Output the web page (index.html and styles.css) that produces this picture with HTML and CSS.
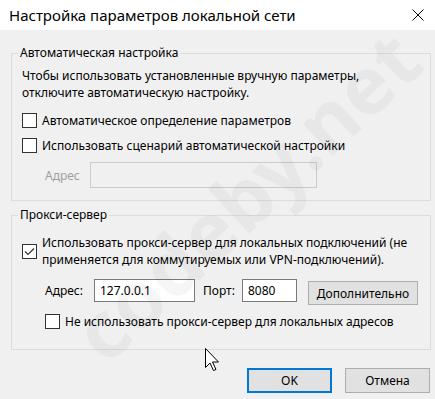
FILE: index.html
```html
<!DOCTYPE html>
<html lang="ru">
<head>
    <meta charset="UTF-8">
    <meta name="viewport" content="width=device-width, initial-scale=1.0">
    <title>Настройка параметров локальной сети</title>
    <link rel="stylesheet" href="styles.css">
</head>
<body>
    <div class="window">
        <div class="titlebar">
            <span class="title">Настройка параметров локальной сети</span>
            <svg class="close" width="12" height="12" viewBox="0 0 12 12">
                <path d="M0.5 0.5 L11.5 11.5 M11.5 0.5 L0.5 11.5" stroke="#000" stroke-width="1" fill="none"/>
            </svg>
        </div>

        <div class="content">
            <fieldset class="group">
                <legend>Автоматическая настройка</legend>
                <p class="hint">Чтобы использовать установленные вручную параметры,<br>отключите автоматическую настройку.</p>
                <label class="check first">
                    <span class="box"></span>
                    <span>Автоматическое определение параметров</span>
                </label>
                <label class="check second">
                    <span class="box"></span>
                    <span>Использовать сценарий автоматической настройки</span>
                </label>
                <div class="addr-row disabled">
                    <span class="addr-label">Адрес</span>
                    <span class="field field-disabled"></span>
                </div>
            </fieldset>

            <fieldset class="group proxy">
                <legend>Прокси-сервер</legend>
                <label class="check multi">
                    <span class="box checked">
                        <svg width="13" height="13" viewBox="0 0 13 13">
                            <path d="M2 6.5 L5 9.5 L11 3.5" stroke="#333" stroke-width="1.2" fill="none"/>
                        </svg>
                    </span>
                    <span>Использовать прокси-сервер для локальных подключений (не<br>применяется для коммутируемых или VPN-подключений).</span>
                </label>
                <div class="proxy-row">
                    <span class="proxy-label">Адрес:</span>
                    <span class="field field-addr">127.0.0.1</span>
                    <span class="port-label">Порт:</span>
                    <span class="field field-port">8080</span>
                    <button class="btn btn-more">Дополнительно</button>
                </div>
                <label class="check bypass">
                    <span class="box"></span>
                    <span>Не использовать прокси-сервер для локальных адресов</span>
                </label>
            </fieldset>

            <div class="actions">
                <button class="btn btn-ok">OK</button>
                <button class="btn">Отмена</button>
            </div>
        </div>

        <div class="watermark">codeby.net</div>

        <svg class="cursor" width="14" height="24" viewBox="0 0 14 24">
            <path d="M0.5 0.5 L0.5 19.5 L5 15 L8.5 22.5 L11 21.5 L7.5 14 L13.5 14 Z" fill="#fff" stroke="#000" stroke-width="1"/>
        </svg>
    </div>
</body>
</html>
```

FILE: styles.css
```css
body {
    margin: 0;
    font-family: "Noto Sans", "Open Sans", sans-serif;
    font-size: 12px;
    color: #000;
}

.window {
    position: relative;
    width: 435px;
    height: 399px;
    background-color: #f0f0f0;
    overflow: hidden;
}

.titlebar {
    display: flex;
    justify-content: space-between;
    align-items: center;
    height: 30px;
    padding: 0 11px 0 9px;
    background-color: #fff;
}

.title {
    font-size: 15px;
}

.close {
    display: block;
}

.content {
    padding: 15px 4px 0 11px;
}

.group {
    margin: 0;
    padding: 0 10px 12px 10px;
    border: 1px solid #dcdcdc;
}

.group legend {
    margin-left: -4px;
    padding: 0 2px;
    line-height: 16px;
}

.proxy {
    margin-top: 6px;
    padding-bottom: 19px;
}

.hint {
    margin: 6px 0 0 0;
    line-height: 17px;
}

.check {
    display: flex;
    align-items: center;
    gap: 5px;
    line-height: 17px;
}

.check.first {
    margin-top: 11px;
}

.check.second {
    margin-top: 8px;
}

.check.multi {
    margin-top: 11px;
}

.check.bypass {
    margin-top: 8px;
    margin-left: 23px;
}

.box {
    display: block;
    flex: none;
    width: 13px;
    height: 13px;
    border: 1px solid #333;
    background-color: #fff;
}

.box svg {
    display: block;
}

.addr-row {
    display: flex;
    align-items: center;
    margin-top: 8px;
}

.addr-label {
    width: 45px;
    padding-left: 23px;
    color: #a0a0a0;
}

.field {
    display: block;
    box-sizing: border-box;
    border: 1px solid #7a7a7a;
    background-color: #fff;
    padding: 0 5px;
}

.field-disabled {
    width: 227px;
    height: 26px;
    border-color: #cccccc;
    background-color: #f0f0f0;
}

.proxy-row {
    display: flex;
    align-items: flex-start;
    margin-top: 11px;
}

.proxy-label {
    width: 49px;
    padding-left: 23px;
    line-height: 23px;
}

.field-addr {
    width: 101px;
    height: 23px;
    line-height: 21px;
}

.port-label {
    width: 39px;
    padding-left: 8px;
    line-height: 23px;
}

.field-port {
    width: 55px;
    height: 23px;
    line-height: 21px;
}

.btn {
    box-sizing: border-box;
    height: 25px;
    padding: 0;
    font-family: inherit;
    font-size: 12px;
    color: #000;
    background-color: #e1e1e1;
    border: 1px solid #adadad;
}

.btn-more {
    width: 110px;
    height: 24px;
    margin-left: 11px;
    margin-top: 2px;
}

.actions {
    display: flex;
    justify-content: flex-end;
    gap: 13px;
    margin-top: 18px;
    padding-right: 1px;
}

.actions .btn {
    width: 85px;
}

.btn-ok {
    border: 2px solid #0078d7;
}

/* водяной знак поверх окна */
.watermark {
    position: absolute;
    left: 26px;
    top: 140px;
    font-size: 80px;
    font-weight: bold;
    color: rgba(0, 0, 0, 0.035);
    transform: rotate(-43deg);
    white-space: nowrap;
    pointer-events: none;
}

.cursor {
    position: absolute;
    left: 205px;
    top: 348px;
}
```
